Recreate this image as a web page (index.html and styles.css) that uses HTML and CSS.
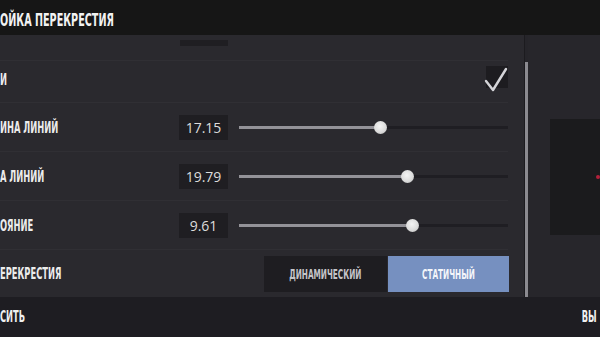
FILE: index.html
```html
<!DOCTYPE html>
<html lang="ru">
<head>
<meta charset="utf-8">
<link rel="stylesheet" href="styles.css">
</head>
<body>
<div class="app">
  <header class="header"><span class="title">ОЙКА ПЕРЕКРЕСТИЯ</span></header>
  <main class="main">
    <section class="settings">
      <div class="row row-partial"><div class="value-stub"></div></div>
      <div class="row row-check">
        <span class="label">И</span>
        <span class="checkbox">
          <svg viewBox="0 0 24 26" width="24" height="26"><path d="M2 15 L9 24 L22 3" fill="none" stroke="#d4d4d8" stroke-width="2.4" stroke-linecap="round" stroke-linejoin="round"/></svg>
        </span>
      </div>
      <div class="row">
        <span class="label">ИНА ЛИНИЙ</span>
        <span class="value">17.15</span>
        <div class="slider"><div class="fill" style="width:141px"></div><span class="thumb" style="left:141px"></span></div>
      </div>
      <div class="row">
        <span class="label">А ЛИНИЙ</span>
        <span class="value">19.79</span>
        <div class="slider"><div class="fill" style="width:168px"></div><span class="thumb" style="left:168px"></span></div>
      </div>
      <div class="row">
        <span class="label">ОЯНИЕ</span>
        <span class="value">9.61</span>
        <div class="slider"><div class="fill" style="width:173px"></div><span class="thumb" style="left:173px"></span></div>
      </div>
      <div class="row row-last">
        <span class="label">ЕРЕКРЕСТИЯ</span>
        <div class="segmented">
          <span class="seg"><span class="narrow-c">ДИНАМИЧЕСКИЙ</span></span>
          <span class="seg seg-active"><span class="narrow-c">СТАТИЧНЫЙ</span></span>
        </div>
      </div>
    </section>
    <div class="scrollbar"><div class="scroll-thumb"></div></div>
    <aside class="preview">
      <div class="preview-box"><span class="dot"></span></div>
    </aside>
  </main>
  <footer class="footer">
    <span class="foot-btn">СИТЬ</span>
    <span class="foot-btn foot-right">ВЫ</span>
  </footer>
</div>
</body>
</html>
```

FILE: styles.css
```css
* { box-sizing: border-box; }
html, body { margin: 0; padding: 0; }
body {
  width: 600px;
  height: 337px;
  overflow: hidden;
  background: #1e1d22;
  font-family: "DejaVu Sans Condensed", "DejaVu Sans", sans-serif;
}
.app { display: flex; flex-direction: column; height: 337px; }

.header {
  height: 35px;
  background: #161616;
  display: flex;
  align-items: center;
}
.title {
  display: inline-block;
  color: #f2f2f2;
  font-weight: bold;
  font-size: 18px;
  transform: scaleX(0.595);
  transform-origin: left center;
  white-space: nowrap;
  margin-top: 3px;
}

.main { display: flex; height: 262px; }
.settings {
  width: 524px;
  background: #2a292e;
  padding-right: 16px;
  display: flex;
  flex-direction: column;
}
.row {
  height: 49px;
  display: flex;
  align-items: center;
  border-top: 1px solid #302f34;
}
.row-partial { height: 25px; border-top: none; align-items: flex-start; }
.value-stub {
  margin-left: 180px;
  margin-top: 5px;
  width: 48px;
  height: 6px;
  background: #1f1e22;
}
.row-check { height: 42px; padding-bottom: 9px; justify-content: space-between; }
.row-last { height: 46px; }

.label {
  display: inline-block;
  color: #ececec;
  font-weight: bold;
  font-size: 16px;
  width: 179px;
  flex: none;
  white-space: nowrap;
  transform: scaleX(0.58);
  transform-origin: left center;
  margin-top: 1px;
  margin-right: -75px;
}
.row-check .label { width: auto; margin-right: 0; margin-top: 4px; }
.checkbox {
  width: 22px;
  height: 22px;
  background: #1d1c20;
  position: relative;
}
.checkbox svg { position: absolute; left: -2px; top: 0; }

.value {
  width: 49px;
  height: 25px;
  margin-left: 75px;
  background: #1f1e22;
  color: #dcdcdc;
  font-family: "Open Sans", sans-serif;
  font-size: 14px;
  display: flex;
  align-items: center;
  justify-content: center;
  flex: none;
}
.slider {
  margin-left: 11px;
  width: 269px;
  height: 3px;
  background: #1f1e23;
  position: relative;
}
.fill {
  height: 3px;
  background: #939298;
}
.thumb {
  position: absolute;
  top: -5px;
  width: 13px;
  height: 13px;
  margin-left: -6px;
  border-radius: 50%;
  background: radial-gradient(circle at 45% 40%, #f4f4f4 0%, #dcdcdc 55%, #b5b5b5 100%);
}

.segmented {
  margin-left: 160px;
  display: flex;
  height: 36px;
  margin-top: 3px;
}
.seg {
  width: 123px;
  display: flex;
  align-items: center;
  justify-content: center;
  background: #1e1d21;
  color: #c4c4c8;
  font-size: 14px;
  font-weight: bold;
  white-space: nowrap;
}
.narrow-c { display: inline-block; transform: scaleX(0.58); transform-origin: center; }
.seg-active {
  width: 121px;
  margin-left: 1px;
  background: #7690c0;
  color: #f4f6fa;
}

.scrollbar {
  width: 4px;
  background: #26252a;
  display: flex;
  flex-direction: column;
  padding-top: 27px;
  border-left: 1px solid #1c1b1f;
}
.scroll-thumb { flex: 1; width: 3px; background: #8b8a90; }

.preview {
  flex: 1;
  background: #27262b;
  padding: 84px 0 0 22px;
  overflow: hidden;
}
.preview-box {
  width: 80px;
  height: 116px;
  background: #1b1b1d;
  position: relative;
}
.dot {
  position: absolute;
  left: 46px;
  top: 56px;
  width: 4px;
  height: 4px;
  border-radius: 50%;
  background: #b3203a;
}

.footer {
  height: 40px;
  background: #1e1d22;
  display: flex;
  align-items: center;
  justify-content: space-between;
  padding-right: 3px;
}
.foot-btn {
  display: inline-block;
  color: #f0f0f0;
  font-weight: bold;
  font-size: 16.5px;
  transform: scaleX(0.56);
  transform-origin: left center;
  margin-top: -2px;
}
.foot-right { transform-origin: right center; }
```
